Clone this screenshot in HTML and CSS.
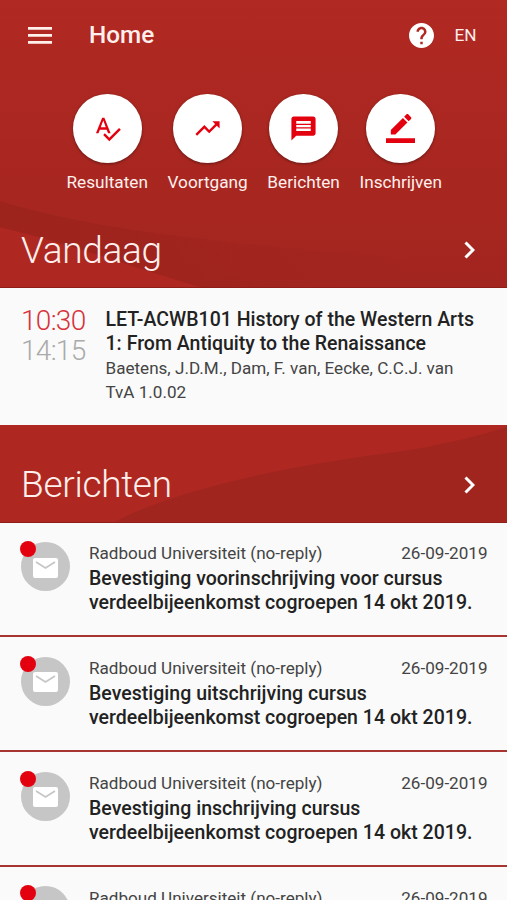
FILE: index.html
```html
<!DOCTYPE html>
<html lang="nl">
<head>
<meta charset="utf-8">
<title>Home</title>
<link rel="stylesheet" href="styles.css">
</head>
<body>
<div class="app">
  <header class="hero">
    <svg class="backdrop" viewBox="0 0 507 288" preserveAspectRatio="none" aria-hidden="true">
      <defs>
        <linearGradient id="shade" x1="0" y1="0" x2="0" y2="1"><stop offset="0" stop-color="#b02922"/><stop offset=".45" stop-color="#ab2721"/><stop offset="1" stop-color="#a3251f"/></linearGradient>
        <linearGradient id="fold" x1="0" y1="0" x2="1" y2="0"><stop offset="0" stop-color="#9d231d"/><stop offset="1" stop-color="#9d231d" stop-opacity="0"/></linearGradient>
      </defs>
      <path d="M0 0H507V288H0z" fill="url(#shade)"/>
      <path d="M0 202C110 235 240 245 420 260V288H0z" fill="url(#fold)"/>
      <path d="M0 228C65 243 135 269 200 288H0z" fill="#ae2821"/>
    </svg>
    <div class="topbar">
      <svg class="menu" viewBox="0 0 24 17"><path d="M0 0h24v2.800H0zM0 7h24v2.800H0zM0 14h24v2.800H0z"/></svg>
      <h1>Home</h1>
      <svg class="help" viewBox="2 2 20 20"><path d="M12 2C6.48 2 2 6.48 2 12s4.480 10 10 10 10-4.480 10-10S17.520 2 12 2zm1 17h-2v-2h2v2zm2.070-7.750l-.9.920C13.450 12.900 13 13.500 13 15h-2v-.5c0-1.100.450-2.100 1.170-2.830l1.240-1.260c.370-.360.590-.860.590-1.410 0-1.100-.9-2-2-2s-2 .9-2 2H8c0-2.210 1.790-4 4-4s4 1.790 4 4c0 .880-.360 1.680-.930 2.250z"/></svg>
      <span class="lang">EN</span>
    </div>
    <nav class="shortcuts">
      <a class="shortcut"><span class="disc"><svg class="ic" viewBox="0 0 24 24"><path d="M12.450 16h2.090L9.430 3H7.570L2.460 16h2.090l1.120-3h5.640l1.140 3zm-6.020-5L8.500 5.480 10.570 11H6.430zm15.160.590l-8.090 8.090L9.830 16l-1.410 1.410 5.090 5.090L23 13l-1.410-1.410z"/></svg></span><span class="name">Resultaten</span></a>
      <a class="shortcut"><span class="disc"><svg class="ic" viewBox="0 0 24 24"><path d="M16 6l2.290 2.290-4.880 4.880-4-4L2 16.590 3.410 18l6-6 4 4 6.300-6.290L22 12V6z"/></svg></span><span class="name">Voortgang</span></a>
      <a class="shortcut"><span class="disc"><svg class="ic" viewBox="0 0 24 24"><path fill-rule="evenodd" d="M4 2h16c1.100 0 2 .9 2 2v12c0 1.100-.9 2-2 2H6l-4 4V4c0-1.100.9-2 2-2zM6 5.700v2.300h12V5.700zm0 3.300v2h12V9zm0 3v2h12v-2z"/></svg></span><span class="name">Berichten</span></a>
      <a class="shortcut"><span class="disc"><svg class="ic" viewBox="0 0 24 24"><path d="M17.750 7L14 3.250l-10 10V17h3.750l10-10zm2.960-2.960c.390-.390.390-1.020 0-1.410L18.370.290c-.390-.390-1.020-.390-1.410 0L15 2.250 18.750 6l1.960-1.960zM0 20h24v4H0z"/></svg></span><span class="name">Inschrijven</span></a>
    </nav>
    <div class="heading today"><h2>Vandaag</h2><svg class="chev" viewBox="0 0 11 18"><path d="M1.500 1.500L9 9l-7.500 7.500"/></svg></div>
  </header>
  <section class="event">
    <div class="times"><div class="start">10:30</div><div class="end">14:15</div></div>
    <div class="details">
      <div class="strong">LET-ACWB101 History of the Western Arts</div>
      <div class="strong">1: From Antiquity to the Renaissance</div>
      <div class="plain">Baetens, J.D.M., Dam, F. van, Eecke, C.C.J. van</div>
      <div class="plain">TvA 1.0.02</div>
    </div>
  </section>
  <section class="band">
    <svg class="backdrop" viewBox="0 0 507 97" preserveAspectRatio="none" aria-hidden="true">
      <path d="M115 97C190 59 305 39 405 26Q460 17 507 2V97z" fill="#a1251f"/>
    </svg>
    <div class="heading"><h2>Berichten</h2><svg class="chev" viewBox="0 0 11 18"><path d="M1.500 1.500L9 9l-7.500 7.500"/></svg></div>
  </section>
  <main>
    <article class="msg"><div class="avatar"><svg viewBox="0 0 25 20"><rect width="25" height="20" rx="2"/><path d="M3 4l9.500 6L22 4"/></svg><i class="dot"></i></div><div class="body"><div class="meta"><span>Radboud Universiteit (no-reply)</span><time>26-09-2019</time></div><div class="strong">Bevestiging voorinschrijving voor cursus</div><div class="strong">verdeelbijeenkomst cogroepen 14 okt 2019.</div></div></article>
    <article class="msg"><div class="avatar"><svg viewBox="0 0 25 20"><rect width="25" height="20" rx="2"/><path d="M3 4l9.500 6L22 4"/></svg><i class="dot"></i></div><div class="body"><div class="meta"><span>Radboud Universiteit (no-reply)</span><time>26-09-2019</time></div><div class="strong">Bevestiging uitschrijving cursus</div><div class="strong">verdeelbijeenkomst cogroepen 14 okt 2019.</div></div></article>
    <article class="msg"><div class="avatar"><svg viewBox="0 0 25 20"><rect width="25" height="20" rx="2"/><path d="M3 4l9.500 6L22 4"/></svg><i class="dot"></i></div><div class="body"><div class="meta"><span>Radboud Universiteit (no-reply)</span><time>26-09-2019</time></div><div class="strong">Bevestiging inschrijving cursus</div><div class="strong">verdeelbijeenkomst cogroepen 14 okt 2019.</div></div></article>
    <article class="msg"><div class="avatar"><svg viewBox="0 0 25 20"><rect width="25" height="20" rx="2"/><path d="M3 4l9.500 6L22 4"/></svg><i class="dot"></i></div><div class="body"><div class="meta"><span>Radboud Universiteit (no-reply)</span><time>26-09-2019</time></div></div></article>
  </main>
</div>
</body>
</html>
```
FILE: styles.css
```css
* { box-sizing: border-box; }
body { margin: 0; font-family: Roboto, "Liberation Sans", sans-serif; background: #fafafa; }
.app { width: 507px; height: 900px; overflow: hidden; }
h1, h2 { margin: 0; }
svg { display: block; flex: none; }
.hero, .band { position: relative; isolation: isolate; color: #fff0ed; background: #ae2821; border-bottom: 1px solid #8f1e18; }
.hero { height: 288px; }
.band { height: 97.500px; padding-top: 23px; }
.backdrop { position: absolute; inset: 0; width: 100%; height: 100%; z-index: -1; }
.topbar { display: flex; align-items: center; height: 70px; padding: 0 30.500px 0 28px; }
.menu { width: 24px; height: 17px; fill: #fff0ed; }
h1 { margin-left: 37px; flex: 1; font-size: 24.300px; font-weight: 500; line-height: 28px; }
.help { width: 25px; height: 25px; fill: #fff; }
.lang { margin-left: 20px; font-size: 17.200px; line-height: 20px; }
.shortcuts { display: flex; gap: 20px; padding: 24px 0 0 66.500px; }
.shortcut { display: flex; flex-direction: column; align-items: center; }
.disc { display: flex; align-items: center; justify-content: center; width: 68.600px; height: 68.600px; border-radius: 50%; background: #fff; box-shadow: 0 1px 3px rgba(0, 0, 0, .4); }
.ic { width: 29px; height: 29px; fill: #e3000f; }
.name { margin-top: 9.400px; font-size: 17.200px; line-height: 20px; white-space: nowrap; }
.shortcut:nth-child(n+2) { margin-left: -.400px; }
.heading { display: flex; align-items: center; justify-content: space-between; height: 74px; padding: 0 32px 0 21px; }
.today { margin-top: 21px; }
h2 { font-size: 37px; letter-spacing: -.300px; font-weight: 300; line-height: 44px; }
.today h2 { padding-top: 2px; }
.chev { width: 11px; height: 18px; fill: none; stroke: #fff; stroke-width: 3; }
.event { display: flex; height: 137px; padding-top: 19px; background: #fafafa; }
.times { width: 105.500px; padding-left: 21px; font-size: 28px; letter-spacing: -.700px; font-weight: 300; line-height: 30.500px; margin-top: -1.500px; }
.start { color: #d7323b; }
.end { color: #aaa; }
.strong { font-size: 19.500px; letter-spacing: .02px; font-weight: 500; line-height: 24.400px; color: #222; white-space: nowrap; }
.plain, .meta { font-size: 17.080px; line-height: 24.400px; color: #444; white-space: nowrap; }
.details { padding-top: 1px; }
.details .strong + .plain { margin-top: -1px; }
.msg { display: flex; height: 114.800px; padding: 19px 19.500px 0 20px; border-bottom: 2.500px solid #a63531; background: #fafafa; }
.avatar { position: relative; display: flex; align-items: center; justify-content: center; width: 49px; height: 49px; border-radius: 50%; background: #c6c6c6; margin: .500px 0 0 .500px; }
.avatar svg { width: 25px; height: 20px; fill: #fff; margin-top: 2px; }
.avatar path { fill: none; stroke: #c6c6c6; stroke-width: 1.800; }
.dot { position: absolute; left: -1px; top: -1px; width: 16px; height: 16px; border-radius: 50%; background: #e3000f; }
.body { flex: 1; margin-left: 19.500px; }
.meta { display: flex; justify-content: space-between; margin: -.300px 0 1.300px; }
```
